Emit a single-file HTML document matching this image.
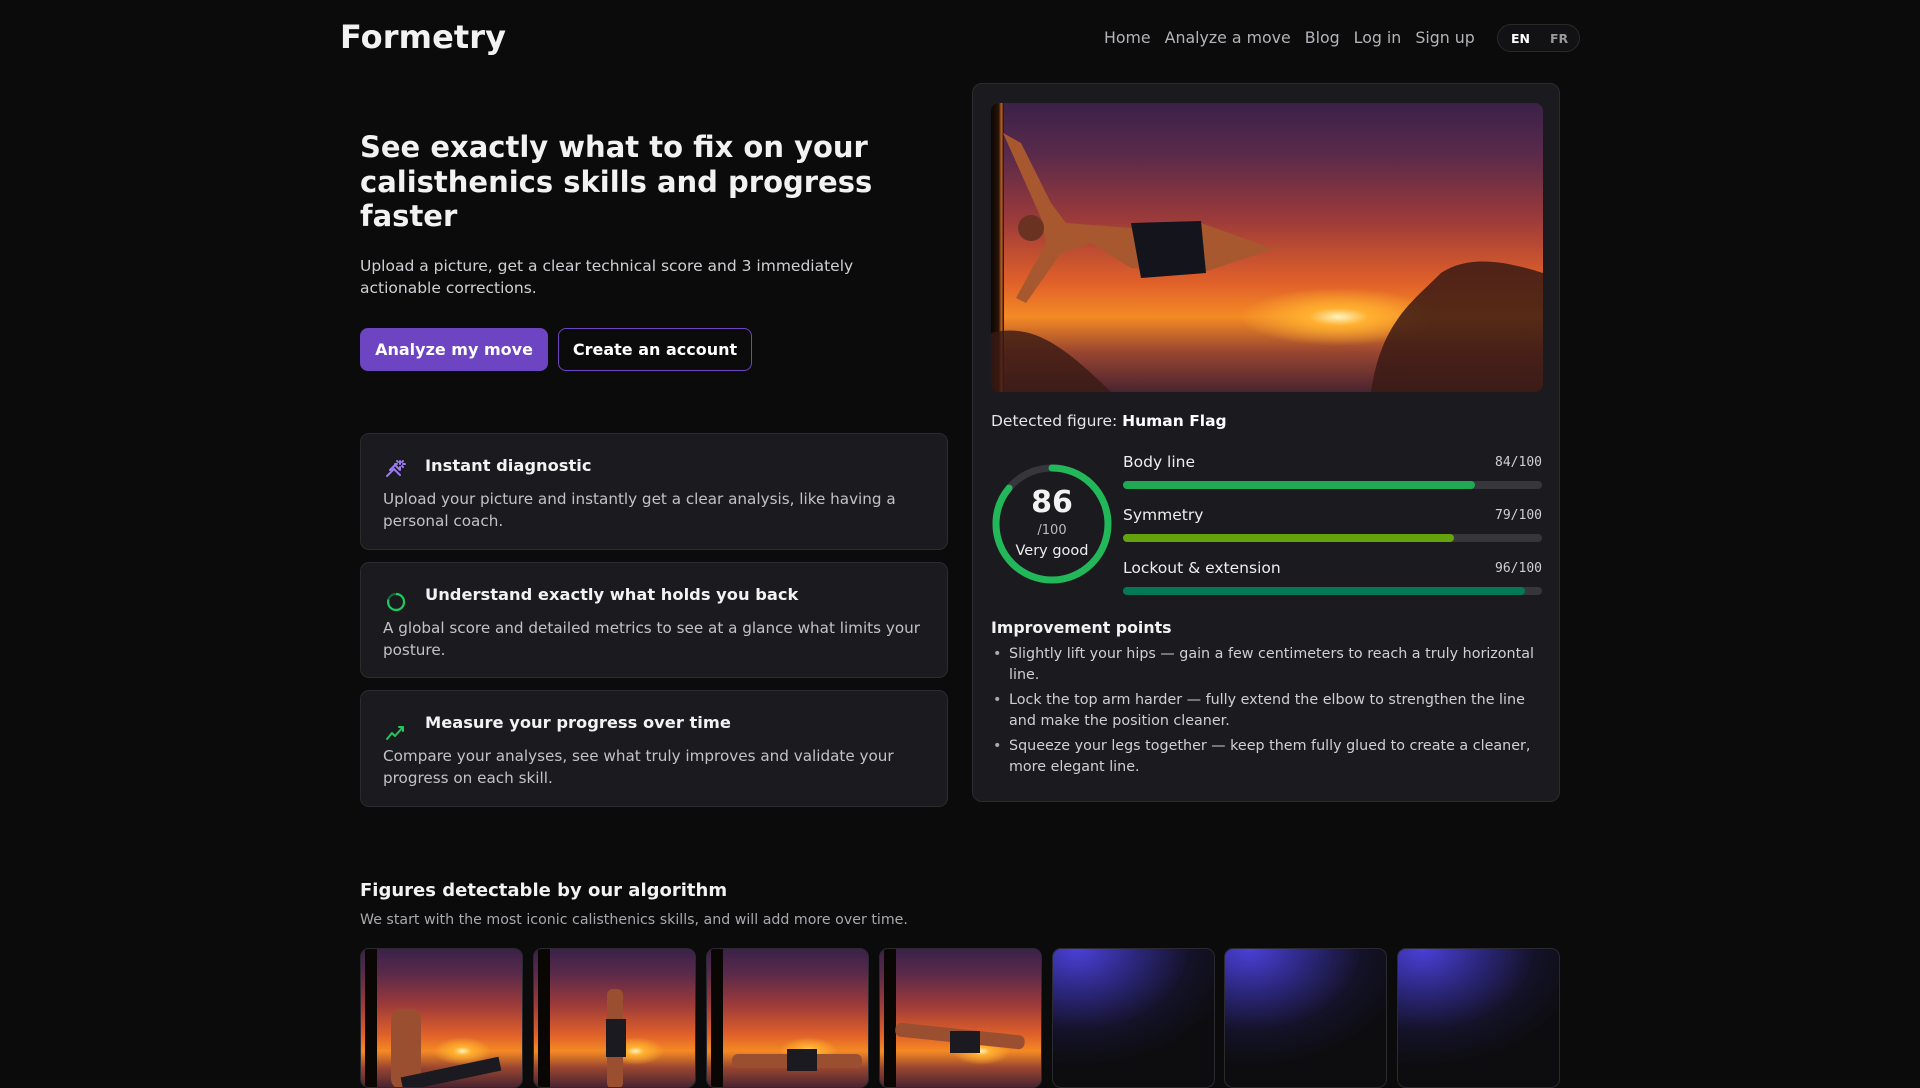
<!DOCTYPE html>
<html><head><meta charset="utf-8"><style>
*{box-sizing:border-box;margin:0;padding:0}
body{width:1920px;height:1080px;overflow:hidden;background:#0b0b0c;font-family:"DejaVu Sans","Liberation Sans",sans-serif;color:#f2f2f2;position:relative}
.abs{position:absolute}
.logo{left:340px;top:18px;font-size:32px;font-weight:bold;letter-spacing:0.1px}
.navw{left:1104px;top:28px;display:flex;gap:14px;font-size:15.8px;color:#b4b4b8}
.lang{left:1497px;top:24px;width:83px;height:28px;border:1px solid #2a2a2e;border-radius:14px;background:#121214;font-size:12.5px;font-weight:bold}
h1{position:absolute;left:360px;top:130px;font-size:29px;line-height:34.5px;width:560px;font-weight:bold}
.sub{left:360px;top:255px;font-size:15.5px;line-height:22px;color:#d0d0d4;width:540px}
.btn{top:328px;height:43px;border-radius:8px;font-size:16px;font-weight:bold;display:flex;align-items:center;justify-content:center}
.card{left:360px;width:588px;background:#1a1a1f;border:1px solid #2a2a30;border-radius:9px}
.card h3{position:absolute;left:64px;top:22px;font-size:16.3px;font-weight:bold}
.card p{position:absolute;left:22px;top:54px;font-size:15.2px;line-height:22px;color:#c2c2c8;width:556px}
.card svg{position:absolute;left:24px;top:24px}
.panel{left:972px;top:83px;width:588px;height:719px;background:#1a1a1f;border:1px solid #2a2a30;border-radius:10px}
.sunset{background:radial-gradient(ellipse 18% 10% at 63% 74%,#fff4c0 0%,#ffb030 30%,rgba(255,120,20,0) 100%),linear-gradient(180deg,#3b2149 0%,#5a2a4a 18%,#9b3a3a 40%,#e0602a 62%,#f48a24 74%,#9a4630 86%,#4a2430 100%)}
.lbl{font-size:15.5px;color:#eee}
.val{font-family:"DejaVu Sans Mono","Liberation Mono",monospace;font-size:13px;color:#cfcfd4;text-align:right;width:80px}
.bar{left:1123px;width:419px;height:8px;border-radius:4px;background:#36363c}
.bar div{height:8px;border-radius:4px}
ul{list-style:none}
li{position:relative;padding-left:18px;font-size:14.3px;line-height:20.5px;color:#cfcfd4;margin-bottom:5px}
li:before{content:"•";position:absolute;left:2px;color:#aaa}
.th{top:948px;width:163px;height:140px;border-radius:9px;border:1px solid #2a2a30;overflow:hidden}
.blue{background:radial-gradient(ellipse 100% 85% at 15% 0%,#4a40d8 0%,#2d2880 35%,#141228 70%,#0d0d10 100%)}
</style></head><body>
<div class="abs logo">Formetry</div>
<div class="abs navw"><span>Home</span><span>Analyze a move</span><span>Blog</span><span>Log in</span><span>Sign up</span></div>
<div class="abs lang"><span class="abs" style="left:13px;top:6px;color:#fff">EN</span><span class="abs" style="left:52px;top:6px;color:#999">FR</span></div>

<h1>See exactly what to fix on your calisthenics skills and progress faster</h1>
<div class="abs sub">Upload a picture, get a clear technical score and 3 immediately actionable corrections.</div>
<div class="abs btn" style="left:360px;width:188px;background:#6d44c2;color:#fff">Analyze my move</div>
<div class="abs btn" style="left:558px;width:194px;border:1.5px solid #6d44c2;color:#fff">Create an account</div>

<div class="abs card" style="top:433px;height:117px">
<svg width="22" height="22" viewBox="0 0 22 22" fill="none" stroke="#9b7bf0" stroke-width="2" stroke-linecap="round"><path d="M2 18l7-7 6 6M5 12l5-5 5 5M15 3v3M15 9v3M12 6h-2M18 6h2M17 4l1-1M13 4l-1-1M17 8l1 1"/></svg>
<h3>Instant diagnostic</h3><p>Upload your picture and instantly get a clear analysis, like having a personal coach.</p></div>
<div class="abs card" style="top:562px;height:116px">
<svg width="22" height="22" viewBox="0 0 22 22" style="top:28px"><circle cx="11" cy="11" r="8" fill="none" stroke="#0f6b3a" stroke-width="2.2"/><path d="M11 3a8 8 0 1 1-7.5 5.5" fill="none" stroke="#22c55e" stroke-width="2.2"/></svg>
<h3>Understand exactly what holds you back</h3><p>A global score and detailed metrics to see at a glance what limits your posture.</p></div>
<div class="abs card" style="top:690px;height:117px">
<svg width="22" height="22" viewBox="0 0 22 22" fill="none" stroke="#22c55e" stroke-width="2" stroke-linecap="round" stroke-linejoin="round" style="top:30px"><path d="M2 18l5-6 3 3 8-9M14 6h4v4"/></svg>
<h3>Measure your progress over time</h3><p>Compare your analyses, see what truly improves and validate your progress on each skill.</p></div>

<div class="abs panel">
 <div class="abs sunset" style="left:18px;top:19px;width:552px;height:289px;border-radius:8px;overflow:hidden">
  <div class="abs" style="left:0;top:0;width:13px;height:289px;background:linear-gradient(90deg,#0a0604,#2a1408 60%,#c06020 80%,#1a0a06)"></div>
  <svg class="abs" style="left:0;top:0" width="552" height="289" viewBox="0 0 552 289">
   <path d="M380 289 C390 220 420 200 450 170 C480 150 520 160 552 170 L552 289Z" fill="#3a1a14" opacity="0.85"/>
   <path d="M0 230 C40 220 70 240 120 289 L0 289Z" fill="#3a1a14" opacity="0.8"/>
   <path d="M12 30 L30 40 L60 100 L75 120 L140 125 L210 120 L280 145 L300 140 L210 170 L140 165 L100 140 L70 150 L35 200 L25 195 L55 140 L50 115 L30 70 Z" fill="#a8582e"/>
   <path d="M140 120 L210 118 L215 170 L150 175 Z" fill="#14141c"/>
   <circle cx="40" cy="125" r="13" fill="#6a3220"/>
  </svg>
 </div>
 <div class="abs" style="left:18px;top:328px;font-size:15.5px;color:#e6e6e6">Detected figure: <b style="color:#fff">Human Flag</b></div>
 <svg class="abs" style="left:18px;top:379px" width="122" height="122" viewBox="0 0 122 122"><circle cx="61" cy="61" r="56" fill="none" stroke="#36363c" stroke-width="7"/><circle cx="61" cy="61" r="56" fill="none" stroke="#22b85a" stroke-width="7" stroke-linecap="round" stroke-dasharray="302.6 351.9" transform="rotate(-90 61 61)"/></svg>
 <div class="abs" style="left:18px;top:401px;width:122px;text-align:center;font-size:30px;font-weight:bold">86</div>
 <div class="abs" style="left:18px;top:439px;width:122px;text-align:center;font-size:13px;color:#bbb">/100</div>
 <div class="abs" style="left:18px;top:459px;width:122px;text-align:center;font-size:14.5px;color:#eee">Very good</div>
</div>
<div class="abs lbl" style="left:1123px;top:453px">Body line</div><div class="abs val" style="left:1462px;top:455px">84/100</div>
<div class="abs bar" style="top:481px"><div style="width:84%;background:#1fa855"></div></div>
<div class="abs lbl" style="left:1123px;top:506px">Symmetry</div><div class="abs val" style="left:1462px;top:508px">79/100</div>
<div class="abs bar" style="top:534px"><div style="width:79%;background:#65a30d"></div></div>
<div class="abs lbl" style="left:1123px;top:559px">Lockout &amp; extension</div><div class="abs val" style="left:1462px;top:561px">96/100</div>
<div class="abs bar" style="top:587px"><div style="width:96%;background:#047857"></div></div>
<div class="abs" style="left:991px;top:618px;font-size:15.8px;font-weight:bold">Improvement points</div>
<ul class="abs" style="left:991px;top:644px;width:555px">
<li>Slightly lift your hips — gain a few centimeters to reach a truly horizontal line.</li>
<li>Lock the top arm harder — fully extend the elbow to strengthen the line and make the position cleaner.</li>
<li>Squeeze your legs together — keep them fully glued to create a cleaner, more elegant line.</li>
</ul>

<div class="abs" style="left:360px;top:880px;font-size:18px;font-weight:bold">Figures detectable by our algorithm</div>
<div class="abs" style="left:360px;top:912px;font-size:14.2px;color:#a8a8ae">We start with the most iconic calisthenics skills, and will add more over time.</div>
<div class="abs th sunset" style="left:360px"><div class="abs" style="left:4px;top:0;width:12px;height:140px;background:#0a0604"></div><div class="abs" style="left:30px;top:60px;width:30px;height:80px;background:#9a5030;border-radius:10px"></div><div class="abs" style="left:40px;top:118px;width:100px;height:14px;background:#1a1a20;transform:rotate(-12deg)"></div></div>
<div class="abs th sunset" style="left:533px"><div class="abs" style="left:4px;top:0;width:12px;height:140px;background:#0a0604"></div><div class="abs" style="left:73px;top:40px;width:16px;height:100px;background:#9a5030;border-radius:6px"></div><div class="abs" style="left:72px;top:70px;width:20px;height:38px;background:#1a1a20"></div></div>
<div class="abs th sunset" style="left:706px"><div class="abs" style="left:4px;top:0;width:12px;height:140px;background:#0a0604"></div><div class="abs" style="left:25px;top:105px;width:130px;height:14px;background:#9a5030;border-radius:6px"></div><div class="abs" style="left:80px;top:100px;width:30px;height:22px;background:#1a1a20"></div></div>
<div class="abs th sunset" style="left:879px"><div class="abs" style="left:4px;top:0;width:12px;height:140px;background:#0a0604"></div><div class="abs" style="left:15px;top:80px;width:130px;height:14px;background:#9a5030;border-radius:6px;transform:rotate(6deg)"></div><div class="abs" style="left:70px;top:82px;width:30px;height:22px;background:#1a1a20"></div></div>
<div class="abs th blue" style="left:1052px"></div>
<div class="abs th blue" style="left:1224px"></div>
<div class="abs th blue" style="left:1397px"></div>
</body></html>
